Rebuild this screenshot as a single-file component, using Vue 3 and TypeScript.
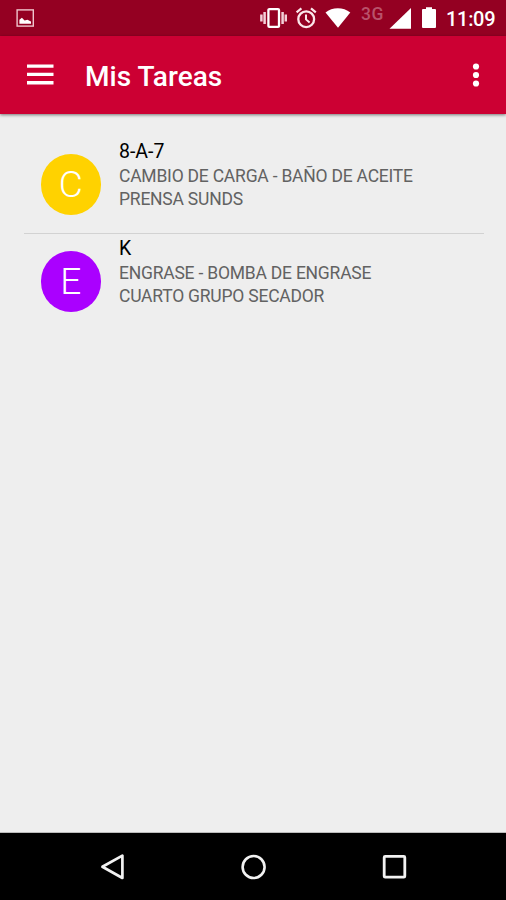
<script setup lang="ts">
interface Task {
  code: string
  lines: string[]
  initial: string
  tone: string
}

const tasks: Task[] = [
  { code: '8-A-7', lines: ['CAMBIO DE CARGA - BAÑO DE ACEITE', 'PRENSA SUNDS'], initial: 'C', tone: 'amber' },
  { code: 'K', lines: ['ENGRASE - BOMBA DE ENGRASE', 'CUARTO GRUPO SECADOR'], initial: 'E', tone: 'violet' },
]
</script>

<template>
  <div class="screen">
    <header class="status">
      <svg class="picture" width="18" height="18" viewBox="0 0 18 18">
        <rect x="1.1" y=".9" width="16.2" height="16.2" fill="none" stroke="#efc5ce" stroke-width="1.4" />
        <path d="M3.4 14.8V10.8L5.9 8.8 8.6 11.4 11.5 10.8 15 12.4V14.8Z" fill="#fff" />
      </svg>
      <svg class="vibrate" width="27" height="22" viewBox="0 0 27 22">
        <path d="M1.4 7.5V14.5M4.6 5V17M22.6 5V17M25.8 7.5V14.5" stroke="#f3d0d8" stroke-width="2.5" />
        <rect x="8.4" y="2.1" width="10.6" height="17.8" rx="1" fill="none" stroke="#fff" stroke-width="2.3" />
      </svg>
      <svg class="alarm" width="22" height="22" viewBox="0 0 22 22" fill="none" stroke="#fbe6ea">
        <circle cx="11.2" cy="12.2" r="7.9" stroke-width="2.3" />
        <path d="M11 7.5V12.4L14.6 15.4" stroke-width="2" />
        <path d="M1.6 5.4L6.4 1.4M16 1.4L20.8 5.4" stroke-width="2.2" />
      </svg>
      <svg class="wifi" width="26" height="20" viewBox="0 0 26 20">
        <path d="M.5 4.4C7-1.3 18.5-1.3 25.3 4.4L13 19.7Z" fill="#fff" />
      </svg>
      <span class="network">3G</span>
      <svg class="signal" width="22" height="21" viewBox="0 0 22 21"><path d="M.5 20.7L22 0V20.7Z" fill="#fff" /></svg>
      <svg class="battery" width="14" height="21" viewBox="0 0 14 21">
        <path d="M4 .3H10V2H13Q14 2 14 3V20Q14 21 13 21H1Q0 21 0 20V3Q0 2 1 2H4Z" fill="#fff" />
      </svg>
      <time class="clock">11:09</time>
    </header>

    <div class="toolbar">
      <svg class="menu" width="27" height="21" viewBox="0 0 27 21">
        <path d="M0 2.1H26.5M0 10.4H26.5M0 18.7H26.5" stroke="#fff" stroke-width="3.4" />
      </svg>
      <h1>Mis Tareas</h1>
      <svg class="more" width="8" height="24" viewBox="0 0 8 24" fill="#fff">
        <circle cx="4" cy="3.5" r="3.1" /><circle cx="4" cy="12" r="3.1" /><circle cx="4" cy="20.5" r="3.1" />
      </svg>
    </div>

    <main class="tasks">
      <article v-for="task in tasks" :key="task.code" class="task">
        <div class="avatar" :class="task.tone"><span>{{ task.initial }}</span></div>
        <div class="text">
          <h2>{{ task.code }}</h2>
          <p v-for="line in task.lines" :key="line">{{ line }}</p>
        </div>
      </article>
    </main>

    <nav class="navigation">
      <svg width="26" height="28" viewBox="0 0 26 28"><path d="M3.4 13.8L23.4 2.6V25Z" fill="none" stroke="#f2f2f2" stroke-width="2.7" stroke-linejoin="round" /></svg>
      <svg width="26" height="28" viewBox="0 0 26 28"><circle cx="13.6" cy="14" r="11" fill="none" stroke="#f2f2f2" stroke-width="2.6" /></svg>
      <svg width="26" height="28" viewBox="0 0 26 28"><rect x="3.2" y="3.4" width="20.6" height="20.8" rx="1" fill="none" stroke="#f2f2f2" stroke-width="2.8" /></svg>
    </nav>
  </div>
</template>

<style>
body {
  margin: 0;
}
</style>

<style scoped>
.screen {
  display: flex;
  flex-direction: column;
  width: 506px;
  height: 900px;
  overflow: hidden;
  background: #eee;
  font-family: Roboto, "Liberation Sans", sans-serif;
}
svg {
  display: block;
  flex: none;
}
h1, h2, p {
  margin: 0;
  white-space: nowrap;
}
.status {
  display: flex;
  align-items: flex-start;
  box-sizing: border-box;
  height: 36px;
  padding: 7px 0 0 16px;
  background: #940022;
  color: #fff;
}
.picture {
  margin-top: 2px;
}
.vibrate {
  margin-left: 226px;
}
.alarm {
  margin-left: 8px;
}
.wifi {
  margin: 1px 0 0 8px;
}
.network {
  width: 24px;
  margin-left: 10px;
  color: #b9526b;
  font-size: 17.5px;
  font-weight: 500;
  line-height: 14px;
  letter-spacing: .5px;
}
.signal {
  margin: 1px 0 0 4px;
}
.battery {
  margin-left: 11px;
}
.clock {
  margin-left: 10px;
  font-size: 20px;
  font-weight: 500;
  line-height: 24px;
  letter-spacing: -.3px;
}
.toolbar {
  position: relative;
  display: flex;
  align-items: center;
  box-sizing: border-box;
  height: 78px;
  padding: 0 26px 0 27px;
  background: #cc0033;
  box-shadow: 0 1px 3px rgba(0, 0, 0, .5);
  color: #fff;
}
.menu {
  margin-top: -1px;
}
h1 {
  margin: 3px 0 0 31px;
  font-size: 28px;
  font-weight: 500;
  line-height: 34px;
  letter-spacing: .05px;
}
.more {
  margin-left: auto;
}
.tasks {
  flex: 1;
  padding: 23px 22px 0 24px;
}
.task {
  display: flex;
  box-sizing: border-box;
  height: 96px;
  padding-left: 16.5px;
}
.task:first-child {
  height: 97px;
  border-bottom: 1px solid #d2d2d2;
}
.avatar {
  display: flex;
  align-items: center;
  justify-content: center;
  width: 60.5px;
  height: 60.5px;
  margin-top: 17.3px;
  border-radius: 50%;
  color: #fff;
  font-size: 37px;
  font-weight: 300;
  line-height: 44px;
}
.amber {
  background: #ffd200;
}
.violet {
  background: #aa00ff;
}
.text {
  margin: 1px 0 0 18px;
}
h2 {
  color: #000;
  font-size: 19.5px;
  font-weight: 400;
  line-height: 27px;
}
p {
  color: #626262;
  font-size: 17.5px;
  line-height: 23px;
  letter-spacing: -.22px;
}
.navigation {
  display: flex;
  justify-content: center;
  gap: 115px;
  box-sizing: border-box;
  height: 67px;
  padding-top: 20px;
  background: #000;
  box-shadow: 0 -1px 0 #bbb;
}
</style>
